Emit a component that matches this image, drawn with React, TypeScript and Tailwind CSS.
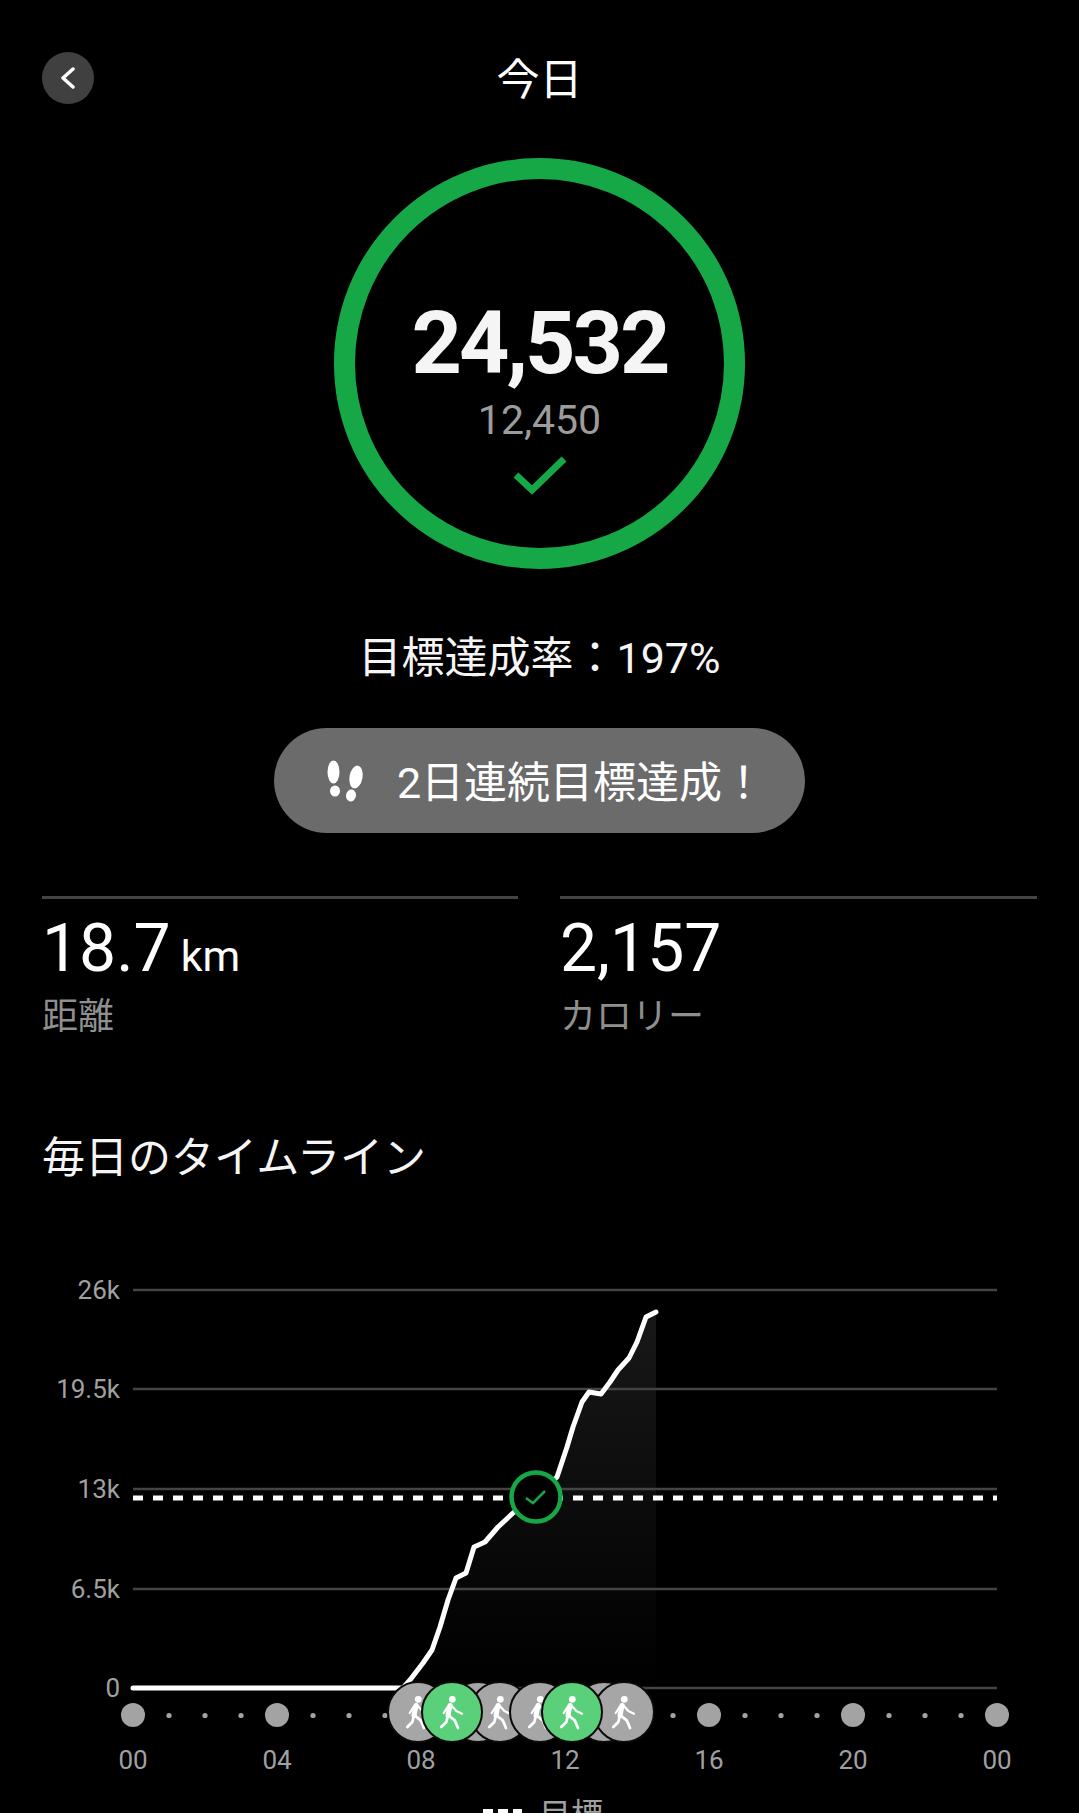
const jp = "font-[Roboto,'Noto_Sans_CJK_JP',sans-serif]"

const curve =
  '133,1688 403,1688 410,1680 423,1663 432,1650 440,1627 448,1600 456,1578 466,1573 474,1547 485,1542 498,1527 513,1513 536,1497 557,1477 567,1447 573,1427 582,1402 589,1392 601,1394 610,1382 618,1370 629,1358 637,1342 646,1317 656,1312'

const yLabels = [
  { label: '26k', y: 1290 },
  { label: '19.5k', y: 1389 },
  { label: '13k', y: 1489 },
  { label: '6.5k', y: 1589 },
  { label: '0', y: 1688 },
]

const xLabels = ['00', '04', '08', '12', '16', '20', '00']

const smallDots = [169, 205, 241, 313, 349, 385, 673, 745, 781, 817, 889, 925, 961]

const activities = [
  { x: 418, green: false },
  { x: 478, green: false },
  { x: 500, green: false },
  { x: 540, green: false },
  { x: 604, green: false },
  { x: 624, green: false },
  { x: 452, green: true },
  { x: 572, green: true },
]

function Walker({ x, y }: { x: number; y: number }) {
  return (
    <g transform={`translate(${x} ${y})`} fill="none" stroke="#fff" strokeLinejoin="round" strokeLinecap="round">
      <circle cx={0.3} cy={-12.7} r={3.4} fill="#fff" stroke="none" />
      <path d="M-2 -6.5 L-4 3.5" strokeWidth={5} />
      <path d="M-4 -5.7 L-8.3 1 M-0.7 -6.7 L4.3 -1 L10 1.7" strokeWidth={2.2} />
      <path d="M-4 3.3 L-5.7 10 L-10.7 15 M-2.3 4.3 L2.7 8.3 L6 16" strokeWidth={2.8} />
    </g>
  )
}

function Chart() {
  return (
    <svg viewBox="0 1240 1079 573" className="block w-[1079px] h-[573px] mt-[54px]">
      <defs>
        <linearGradient id="area" x1="0" y1="0" x2="0" y2="1">
          <stop offset="0" stopColor="#181818" />
          <stop offset="1" stopColor="#000" />
        </linearGradient>
      </defs>
      <polygon points={`${curve} 656,1688`} fill="url(#area)" />
      {yLabels.map(l => (
        <g key={l.label}>
          <line x1={133} x2={997} y1={l.y} y2={l.y} stroke="#444" strokeWidth={2.5} />
          <text x={120} y={l.y + 9} textAnchor="end" fontFamily="Roboto, sans-serif" fontSize={26} fill="#a0a0a0">
            {l.label}
          </text>
        </g>
      ))}
      <line x1={133} x2={997} y1={1498} y2={1498} stroke="#fff" strokeWidth={5} strokeDasharray="10 10" />
      <polyline points={curve} fill="none" stroke="#fff" strokeWidth={5} strokeLinejoin="round" strokeLinecap="round" />
      <circle cx={536} cy={1497} r={24.5} fill="#000" stroke="#16a846" strokeWidth={4.5} />
      <path d="M526 1498 L533 1503 L545 1491" fill="none" stroke="#16a846" strokeWidth={2.5} />

      {xLabels.map((l, i) => (
        <g key={i}>
          <circle cx={133 + i * 144} cy={1715} r={12} fill="#a3a3a3" />
          <text x={133 + i * 144} y={1769} textAnchor="middle" fontFamily="Roboto, sans-serif" fontSize={26} fill="#a0a0a0">
            {l}
          </text>
        </g>
      ))}
      {smallDots.map(x => (
        <circle key={x} cx={x} cy={1715.5} r={2.6} fill="#a3a3a3" />
      ))}
      {activities.map(a => (
        <g key={a.x}>
          <circle cx={a.x} cy={1712} r={30} fill={a.green ? '#5ad07a' : '#a6a6a6'} stroke="#0a0a0a" strokeWidth={2} />
          <Walker x={a.x} y={1712} />
        </g>
      ))}

      <line x1={483} x2={522} y1={1811} y2={1811} stroke="#fff" strokeWidth={4} strokeDasharray="10 5" />
      <text x={539} y={1826} fontFamily="'Noto Sans CJK JP', sans-serif" fontSize={32} fill="#a0a0a0">
        目標
      </text>
    </svg>
  )
}

export default function App() {
  return (
    <div className={`w-[1079px] h-[1813px] overflow-hidden bg-black text-white ${jp}`}>
      <div className="relative flex items-center justify-center h-[52px] mt-[52px]">
        <div className="absolute left-[42px] top-0 w-[52px] h-[52px] rounded-full bg-[#404040] flex items-center justify-center">
          <svg width="22" height="22" viewBox="0 0 22 22" fill="none" stroke="#fff" strokeWidth="3.5" strokeLinecap="round" strokeLinejoin="round">
            <path d="M16 2 L6 11 L16 20" />
          </svg>
        </div>
        <h1 className="text-[43px] leading-[52px] pt-[3px] font-normal">今日</h1>
      </div>

      <div className="mt-[54px] mx-auto w-[411px] h-[411px] rounded-full border-[21px] border-[#16a846] flex flex-col items-center">
        <div className="mt-[122px] text-[88px] leading-[84px] tracking-[-3px] font-bold text-[#f5f5f5]">24,532</div>
        <div className="mt-[13px] text-[41px] leading-[44px] text-[#9c9c9c]">12,450</div>
        <svg className="mt-[13px]" width="54" height="40" viewBox="0 0 54 40" fill="none" stroke="#16a846" strokeWidth="7">
          <path d="M3 20 L19 35 L51 4" />
        </svg>
      </div>

      <p className="mt-[61px] text-center text-[43px] leading-[56px] text-[#f5f5f5]">目標達成率：197%</p>

      <div className="mt-[42px] mx-auto w-[531px] h-[105px] rounded-full bg-[#6b6b6b] flex items-center justify-center gap-[32px] pl-[13px] text-[43px]">
        <svg width="38" height="42" viewBox="0 0 38 42" fill="#fff">
          <ellipse cx="6.5" cy="12" rx="6" ry="11.5" />
          <ellipse cx="8" cy="31" rx="5" ry="5.5" />
          <ellipse cx="29" cy="17" rx="6.5" ry="11.5" transform="rotate(10 29 17)" />
          <ellipse cx="24" cy="35.5" rx="5" ry="6" transform="rotate(10 24 35.5)" />
        </svg>
        <span className="pt-[5px]">2日連続目標達成！</span>
      </div>

      <div className="mt-[63px] mx-[42px] grid grid-cols-[476px_477px] gap-x-[42px]">
        <div className="border-t-[3px] border-[#444] pt-[15px]">
          <div className="h-[70px] flex items-baseline text-[66px] leading-[70px]">
            18.7<span className="ml-[10px] text-[43px]">km</span>
          </div>
          <div className="mt-[10px] text-[36px] leading-[46px] text-[#8f8f8f]">距離</div>
        </div>
        <div className="border-t-[3px] border-[#444] pt-[15px]">
          <div className="h-[70px] text-[66px] leading-[70px]">2,157</div>
          <div className="mt-[10px] text-[36px] leading-[46px] text-[#8f8f8f]">カロリー</div>
        </div>
      </div>

      <h2 className="mt-[90px] ml-[42px] text-[43px] leading-[56px] font-normal text-[#f5f5f5]">毎日のタイムライン</h2>

      <Chart />
    </div>
  )
}
